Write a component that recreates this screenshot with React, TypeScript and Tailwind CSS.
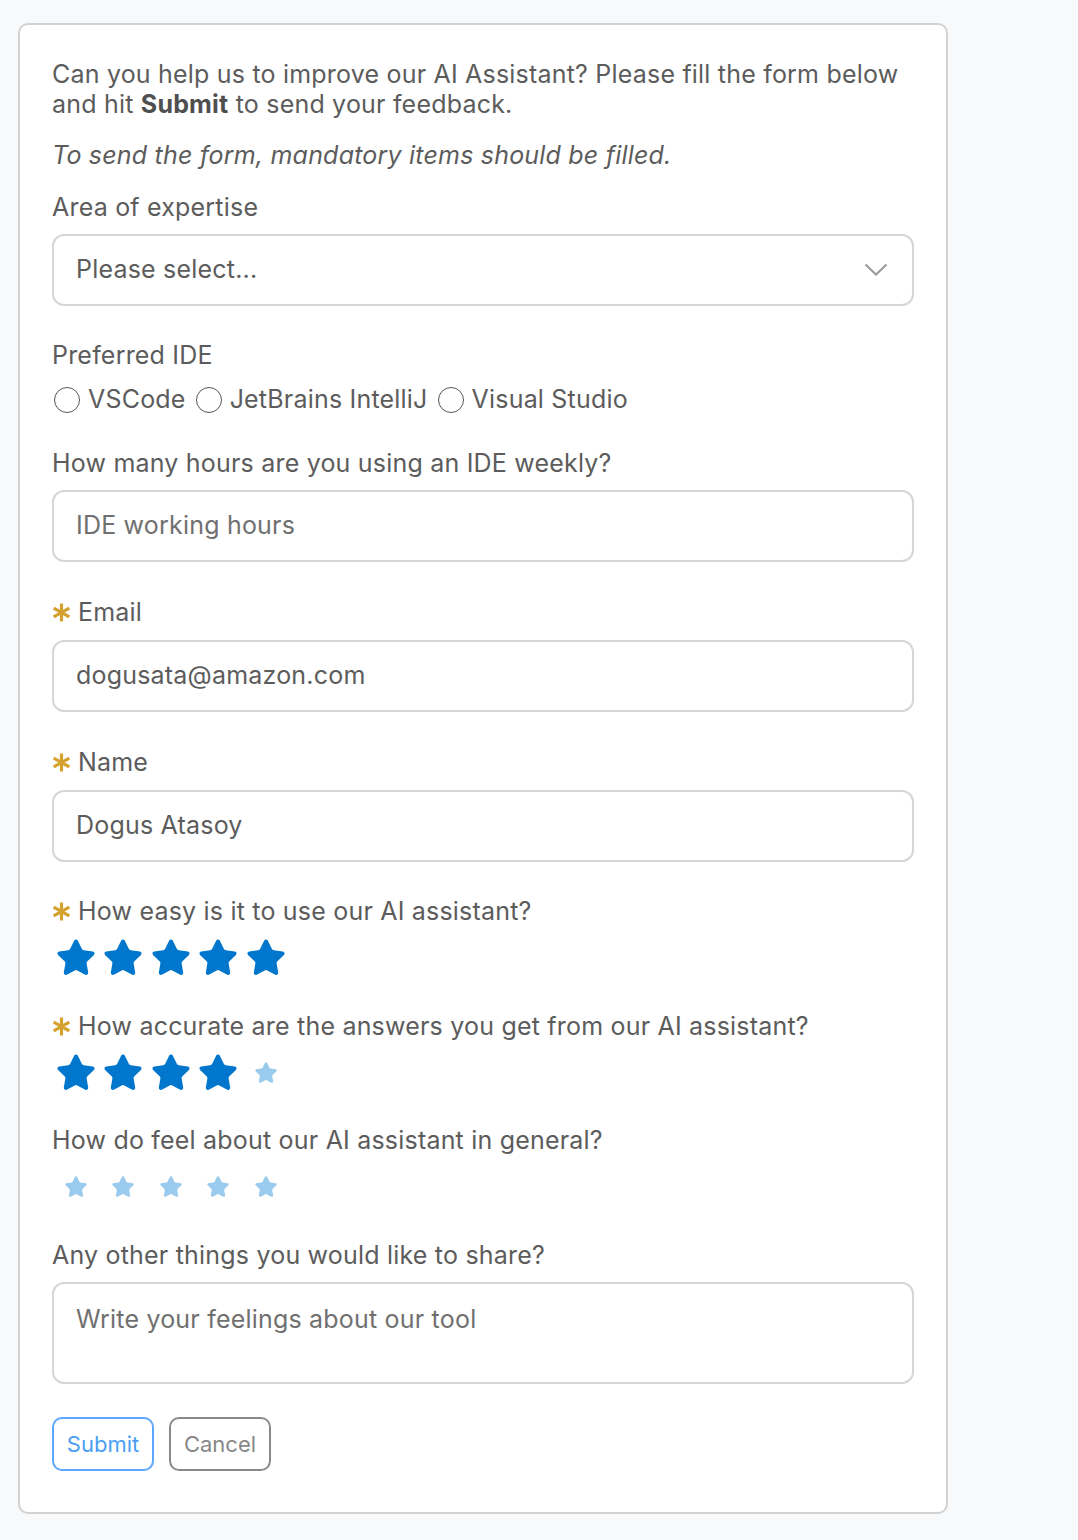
import * as React from 'react';
import { Star } from 'lucide-react';

const font = { fontFamily: 'Inter, "Noto Sans", sans-serif' };

const Asterisk = () => (
  <svg width="19" height="19" viewBox="0 0 18 18" className="shrink-0 mr-[7px]" aria-hidden>
    <g stroke="#d4a12e" strokeWidth="3" strokeLinecap="butt">
      <line x1="9" y1="0.5" x2="9" y2="17.5" />
      <line x1="1.6" y1="4.75" x2="16.4" y2="13.25" />
      <line x1="1.6" y1="13.25" x2="16.4" y2="4.75" />
    </g>
  </svg>
);

const Label = ({ children, required }: { children: React.ReactNode; required?: boolean }) => (
  <div className="flex items-center h-[30px] text-[25px] leading-[30px] tracking-[0.2px] text-[#5c5c5c]">
    {required ? <Asterisk /> : null}
    <span>{children}</span>
  </div>
);

const boxCls =
  'w-full h-[72px] rounded-[12px] border-2 border-[#d6d6d6] bg-white px-[22px] flex items-center text-[25px] tracking-[0.2px] text-[#5c5c5c]';

const Rating = ({ value }: { value: number }) => (
  <div className="flex items-center h-[36px]">
    {Array.from({ length: 5 }).map((_, idx) => (
      <span key={idx} className="w-[47.5px] h-[36px] flex items-center justify-center">
        {idx < value ? (
          <Star size={42} fill="#0077cc" color="#0077cc" strokeWidth={1.2} />
        ) : (
          <Star size={24} fill="#9acbee" color="#9acbee" strokeWidth={1.5} />
        )}
      </span>
    ))}
  </div>
);

const Radio = ({ label }: { label: string }) => (
  <label className="flex items-center gap-[8px]">
    <span className="w-[26px] h-[26px] rounded-full border-[1.5px] border-[#555] bg-white" />
    <span>{label}</span>
  </label>
);

export default function App() {
  return (
    <div className="min-h-[1540px] bg-[#f8f9fb] pl-[18px] pt-[23px]" style={font}>
      <div className="w-[930px] rounded-[10px] border-2 border-[#d2d2d2] bg-white px-[32px] pt-[34px] pb-[41px] text-[#5c5c5c]">
        <p className="text-[25px] leading-[30px] tracking-[0.2px]">
          Can you help us to improve our AI Assistant? Please fill the form below and hit{' '}
          <b className="font-bold text-[#4f4f4f]">Submit</b> to send your feedback.
        </p>
        <p className="mt-[21px] text-[25px] leading-[30px] tracking-[0.2px] italic">
          To send the form, mandatory items should be filled.
        </p>

        <div className="mt-[22px] flex flex-col gap-[12px]">
          <Label>Area of expertise</Label>
          <div className={boxCls + ' justify-between'}>
            <span>Please select...</span>
            <svg width="24" height="14" viewBox="0 0 24 14" className="mr-[2px]" aria-hidden>
              <path d="M1.5 1.5 L12 11.5 L22.5 1.5" fill="none" stroke="#9a9a9a" strokeWidth="2" />
            </svg>
          </div>
        </div>

        <div className="mt-[34px] flex flex-col gap-[15px]">
          <Label>Preferred IDE</Label>
          <div className="flex items-center gap-[10px] h-[30px] text-[25px] tracking-[0.2px] pl-[2px]">
            <Radio label="VSCode" />
            <Radio label="JetBrains IntelliJ" />
            <Radio label="Visual Studio" />
          </div>
        </div>

        <div className="mt-[33px] flex flex-col gap-[12px]">
          <Label>How many hours are you using an IDE weekly?</Label>
          <div className={boxCls + ' text-[#707070]'}>IDE working hours</div>
        </div>

        <div className="mt-[35px] flex flex-col gap-[13px]">
          <Label required>Email</Label>
          <div className={boxCls}>dogusata@amazon.com</div>
        </div>

        <div className="mt-[35px] flex flex-col gap-[13px]">
          <Label required>Name</Label>
          <div className={boxCls}>Dogus Atasoy</div>
        </div>

        <div className="mt-[34px] flex flex-col gap-[14px]">
          <Label required>How easy is it to use our AI assistant?</Label>
          <Rating value={5} />
        </div>

        <div className="mt-[35px] flex flex-col gap-[14px]">
          <Label required>How accurate are the answers you get from our AI assistant?</Label>
          <Rating value={4} />
        </div>

        <div className="mt-[34px] flex flex-col gap-[14px]">
          <Label>How do feel about our AI assistant in general?</Label>
          <Rating value={0} />
        </div>

        <div className="mt-[35px] flex flex-col gap-[12px]">
          <Label>Any other things you would like to share?</Label>
          <div className="w-full h-[102px] rounded-[12px] border-2 border-[#d6d6d6] bg-white px-[22px] pt-[20px] text-[25px] leading-[30px] tracking-[0.2px] text-[#707070]">
            Write your feelings about our tool
          </div>
        </div>

        <div className="mt-[33px] flex items-center gap-[15px]">
          <button
            type="button"
            className="h-[54px] w-[102px] rounded-[10px] border-2 border-[#5aa8ff] bg-white text-[22px] text-[#4a9ff5]"
          >
            Submit
          </button>
          <button
            type="button"
            className="h-[54px] w-[102px] rounded-[10px] border-2 border-[#8a8a8a] bg-white text-[22px] text-[#888]"
          >
            Cancel
          </button>
        </div>
      </div>
    </div>
  );
}
